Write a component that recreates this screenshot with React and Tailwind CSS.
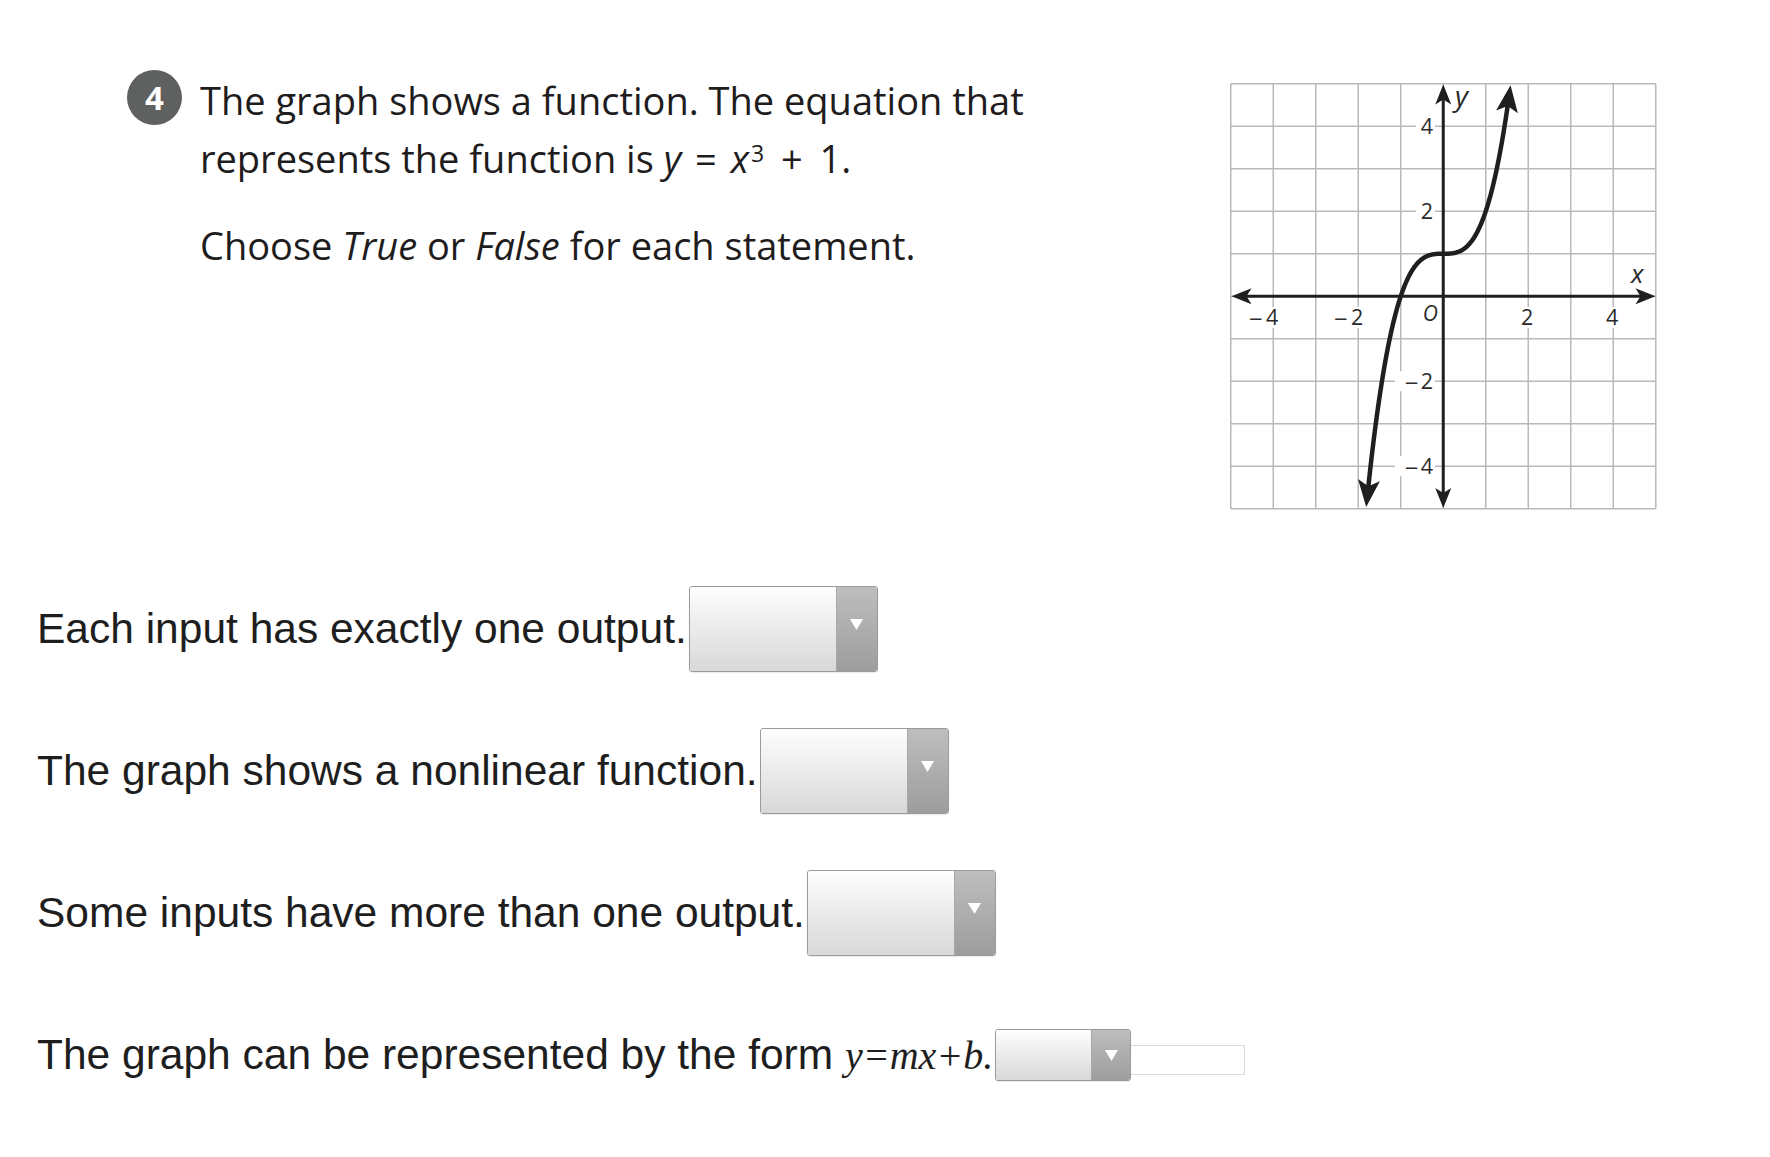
import React from 'react';

const U = 42.5;
const O = 213.25;

function arrowHead(tip, dir, len, half, notch) {
  const [tx, ty] = tip;
  const [dx, dy] = dir;
  const px = -dy;
  const py = dx;
  const bx = tx - dx * len;
  const by = ty - dy * len;
  const pts = [
    [tx, ty],
    [bx + px * half, by + py * half],
    [tx - dx * (len - notch), ty - dy * (len - notch)],
    [bx - px * half, by - py * half],
  ];
  return pts.map((p) => p.map((v) => v.toFixed(2)).join(',')).join(' ');
}

function norm(x, y) {
  const l = Math.hypot(x, y);
  return [x / l, y / l];
}

function Graph() {
  const grid = Array.from({ length: 11 }, (_, i) => 0.75 + i * U);
  const toX = (x) => O + U * x;
  const toY = (y) => O - U * y;

  const xTop = 1.583;
  const xBot = -1.813;
  const topTip = [toX(xTop), toY(xTop ** 3 + 1)];
  const botTip = [toX(xBot), toY(xBot ** 3 + 1)];
  const topDir = norm(1, -3 * xTop * xTop);
  const botDir = norm(-1, 3 * xBot * xBot);

  const pts = [];
  for (let x = xBot; x <= xTop; x += 0.01) {
    const p = [toX(x), toY(x ** 3 + 1)];
    if (Math.hypot(p[0] - topTip[0], p[1] - topTip[1]) < 18) continue;
    if (Math.hypot(p[0] - botTip[0], p[1] - botTip[1]) < 18) continue;
    pts.push(p);
  }
  const curve = pts.map((p) => p.map((v) => v.toFixed(2)).join(',')).join(' ');

  const xLabels = [-4, -2, 2, 4];
  const yLabels = [4, 2, -2, -4];

  return (
    <svg width="427" height="440" viewBox="0 -13 427 440" className="block">
      {grid.map((g) => (
        <line key={`v${g}`} x1={g} y1="0.75" x2={g} y2="425.75" stroke="#b9b9b9" strokeWidth="1.5" />
      ))}
      {grid.map((g) => (
        <line key={`h${g}`} x1="0.75" y1={g} x2="425.75" y2={g} stroke="#b9b9b9" strokeWidth="1.5" />
      ))}

      {/* label backgrounds */}
      {xLabels.map((v) => (
        <rect key={`xb${v}`} x={toX(v) - (v < 0 ? 29 : 9)} y="224" width={v < 0 ? 38 : 17} height="21" fill="#fff" />
      ))}
      {yLabels.map((v) => (
        <rect key={`yb${v}`} x={v < 0 ? 165 : 186} y={toY(v) - 10} width={v < 0 ? 40 : 19} height="20" fill="#fff" />
      ))}
      <rect x="188" y="222" width="22" height="19" fill="#fff" />

      {/* axes */}
      <line x1="14" y1={O} x2="413" y2={O} stroke="#1f1f1f" strokeWidth="3" />
      <line x1={O} y1="14" x2={O} y2="413" stroke="#1f1f1f" strokeWidth="3" />
      <polygon points={arrowHead([1.5, O], [-1, 0], 20, 8, 5)} fill="#1f1f1f" />
      <polygon points={arrowHead([425.5, O], [1, 0], 20, 8, 5)} fill="#1f1f1f" />
      <polygon points={arrowHead([O, 1.5], [0, -1], 20, 8, 5)} fill="#1f1f1f" />
      <polygon points={arrowHead([O, 425], [0, 1], 20, 8, 5)} fill="#1f1f1f" />

      {/* curve */}
      <polyline points={curve} fill="none" stroke="#1f1f1f" strokeWidth="4.5" strokeLinejoin="round" />
      <polygon points={arrowHead(topTip, topDir, 27, 11, 6)} fill="#1f1f1f" />
      <polygon points={arrowHead(botTip, botDir, 27, 11, 6)} fill="#1f1f1f" />

      <g fontFamily="'Open Sans', sans-serif" fontSize="21.5" fill="#2a2a2a">
        {xLabels.map((v) => (
          <g key={`xl${v}`}>
            <text x={toX(v) - 1} y="242" textAnchor="middle">{Math.abs(v)}</text>
            {v < 0 && (
              <text x={toX(v) - 10} y="242" textAnchor="end" fontFamily="'DejaVu Sans', sans-serif" fontSize="18">−</text>
            )}
          </g>
        ))}
        {yLabels.map((v) => (
          <g key={`yl${v}`}>
            <text x="203" y={toY(v) + 8} textAnchor="end">{Math.abs(v)}</text>
            {v < 0 && (
              <text x="189" y={toY(v) + 8} textAnchor="end" fontFamily="'DejaVu Sans', sans-serif" fontSize="18">−</text>
            )}
          </g>
        ))}
        <text x="208" y="238" textAnchor="end" fontStyle="italic" fontSize="21">O</text>
        <text x="225" y="23" fontStyle="italic" fontSize="28">y</text>
        <text x="401" y="200" fontStyle="italic" fontSize="26">x</text>
      </g>
    </svg>
  );
}

function Dropdown({ small }) {
  return (
    <div
      className={`ml-[2px] flex shrink-0 overflow-hidden rounded-[3px] border border-[#9a9a9a] shadow-[0_1px_1px_rgba(0,0,0,0.08)] ${
        small ? 'h-[52px] w-[136px]' : 'h-[86px] w-[189px]'
      }`}
    >
      <div className="flex-1 bg-linear-to-b from-[#fefefe] to-[#d8d8d8]" />
      <div
        className={`flex justify-center border-l border-[#a9a9a9] bg-linear-to-b from-[#bebebe] to-[#9d9d9d] ${
          small ? 'w-[39px] items-center' : 'w-[41px] items-center pb-[10px]'
        }`}
      >
        <svg width="13" height="11" viewBox="0 0 13 11">
          <path d="M0 0H13L6.5 11Z" fill="#ffffff" />
        </svg>
      </div>
    </div>
  );
}

const STATEMENTS = [
  'Each input has exactly one output.',
  'The graph shows a nonlinear function.',
  'Some inputs have more than one output.',
];

export default function App() {
  return (
    <div className="min-h-[1157px] w-[1770px] bg-white">
      {/* Question header + graph */}
      <div className="flex items-start pt-[67px]">
        <div className="flex w-[1230px] shrink-0 pl-[127px]">
          <div className="mt-[3px] flex h-[55px] w-[55px] shrink-0 items-center justify-center rounded-full bg-[#5e6160] font-['Open_Sans',sans-serif] text-[33px] font-bold text-white">
            4
          </div>
          <div className="ml-[18px] mt-[4px] whitespace-nowrap font-['Open_Sans',sans-serif] text-[38px] leading-[58px] text-[#1f1c1d]">
            <div>The graph shows a function. The equation that</div>
            <div>
              represents the function is <i>y</i> <span className="mx-[4px]">=</span> <i>x</i>
              <sup className="ml-[2px] text-[23px]">3</sup> <span className="mx-[7px]">+</span> 1.
            </div>
            <div className="mt-[29px]">
              Choose <i>True</i> or <i>False</i> for each statement.
            </div>
          </div>
        </div>
        <div className="mt-[3px]">
          <Graph />
        </div>
      </div>

      {/* Statements */}
      <div className="mt-[48px] font-['Liberation_Sans',Arial,sans-serif] text-[42.5px] leading-[48px] text-[#1e1e1e]">
        {STATEMENTS.map((s) => (
          <div key={s} className="flex h-[142px] items-center pl-[37px]">
            <span className="whitespace-nowrap">{s}</span>
            <Dropdown />
          </div>
        ))}
        <div className="flex h-[142px] items-center pl-[37px]">
          <span className="whitespace-nowrap">
            The graph can be represented by the form{' '}
            <i className="font-['Liberation_Serif','Times_New_Roman',serif] text-[40px]">y=mx+b.</i>
          </span>
          <Dropdown small />
          <div className="mt-[9px] h-[30px] w-[114px] border border-l-0 border-[#d9d9d9] bg-white" />
        </div>
      </div>
    </div>
  );
}
